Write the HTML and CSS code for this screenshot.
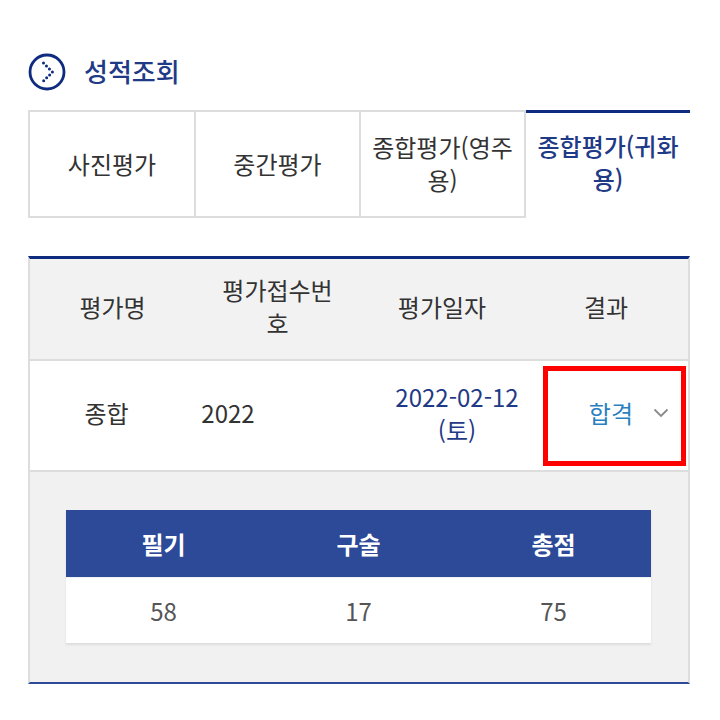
FILE: index.html
```html
<!DOCTYPE html>
<html lang="ko">
    <head>
        <meta charset="utf-8">
        <link rel="stylesheet" href="styles.css">
        <title>성적조회</title>
    </head>
    <body>
        <h1 class="pageTitle">
            <svg class="titleIcon" width="38" height="38" viewBox="0 0 38 38">
                <circle cx="19" cy="19" r="17" fill="none" stroke="#0f2b80" stroke-width="2.8"/>
                <path d="M15.5 10 L24.5 19 L15.5 28" fill="none" stroke="#0f2b80" stroke-width="3" stroke-linecap="round" stroke-dasharray="0 4.2"/>
            </svg>
            <span class="titleText">성적조회</span>
        </h1>
        <div class="tabs">
            <a class="tab">사진평가</a>
            <a class="tab">중간평가</a>
            <a class="tab">종합평가(영주용)</a>
            <a class="tab on">종합평가(귀화용)</a>
        </div>
        <div class="results">
            <div class="headRow">
                <div>평가명</div>
                <div>평가접수번호</div>
                <div>평가일자</div>
                <div>결과</div>
            </div>
            <div class="dataRow">
                <div class="kind">종합</div>
                <div class="num">2022</div>
                <div class="date">2022-02-12 (토)</div>
                <div class="result">
                    <span class="pass">합격</span>
                    <svg width="16" height="10" viewBox="0 0 16 10"><path d="M1.5 1.5 L8 8 L14.5 1.5" fill="none" stroke="#8a8a8a" stroke-width="1.8"/></svg>
                </div>
                <div class="marker"></div>
            </div>
            <div class="detail">
                <div class="scores">
                    <div class="scoreHead">필기</div>
                    <div class="scoreHead">구술</div>
                    <div class="scoreHead">총점</div>
                    <div class="scoreVal">58</div>
                    <div class="scoreVal">17</div>
                    <div class="scoreVal">75</div>
                </div>
            </div>
        </div>
    </body>
</html>
```

FILE: styles.css
```css
html, body {margin: 0; padding: 0; background: #fff;}
body {font-family: "Noto Sans CJK KR", "Noto Sans", sans-serif; font-size: 24px; color: #333; width: 662px; padding: 50px 30px 0 28px;}

.pageTitle {display: flex; align-items: center; gap: 18px; height: 44px; margin: 0 0 16px 0; font-size: 26px; font-weight: 500; color: #1f3a86;}
.titleIcon {flex: none;}
.titleText {padding-bottom: 4px;}

.tabs {display: grid; grid-template-columns: 166px 165px 167px 164px; height: 108px;}
.tab {display: flex; align-items: center; justify-content: center; text-align: center; line-height: 33px; padding: 0 10px 2px; border: 2px solid #ddd; border-right: 0; box-sizing: border-box; word-break: break-all;}
.tab:nth-child(3) {border-right: 2px solid #ddd;}
.tab.on {border: 0; border-top: 3px solid #0f2b80; color: #1f3a86; font-weight: 500; padding-bottom: 7px;}

.results {margin-top: 38px; border-top: 3px solid #0f2b80; border-bottom: 2px solid #2d4a99; border-left: 2px solid #ddd; border-right: 2px solid #ddd; box-sizing: border-box; height: 428px;}

.headRow {display: grid; grid-template-columns: 165px 165px 164px 164px; height: 100px; align-items: center; text-align: center; line-height: 33px; background: #f2f2f2; border-bottom: 2px solid #ddd;}
.headRow div {padding: 0 24px 6px;}

.dataRow {position: relative; display: grid; grid-template-columns: 153px 90px 103px 162px 150px; height: 109px; align-items: center; line-height: 33px; border-bottom: 2px solid #ddd;}
.dataRow > div:not(.marker) {padding-bottom: 6px;}
.kind, .num {text-align: center;}
.date {grid-column: 4; text-align: center; color: #1f3a86;}
.result {display: flex; align-items: center; justify-content: flex-end; gap: 20px; padding-right: 19px;}
.pass {color: #2a7fc0;}
.marker {position: absolute; left: 513px; top: 5px; width: 143px; height: 100px; border: 5px solid #f00; box-sizing: border-box;}

.detail {background: #f1f1f1; height: 210px; padding: 38px 37px 0 36px; box-sizing: border-box;}
.scores {display: grid; grid-template-columns: repeat(3, 1fr); box-shadow: 0 2px 2px #ddd;}
.scoreHead {background: #2d4a99; color: #fff; font-weight: 700; text-align: center; line-height: 67px; margin-bottom: 1px;}
.scoreVal {background: #fff; text-align: center; line-height: 65px; color: #555;}
```
